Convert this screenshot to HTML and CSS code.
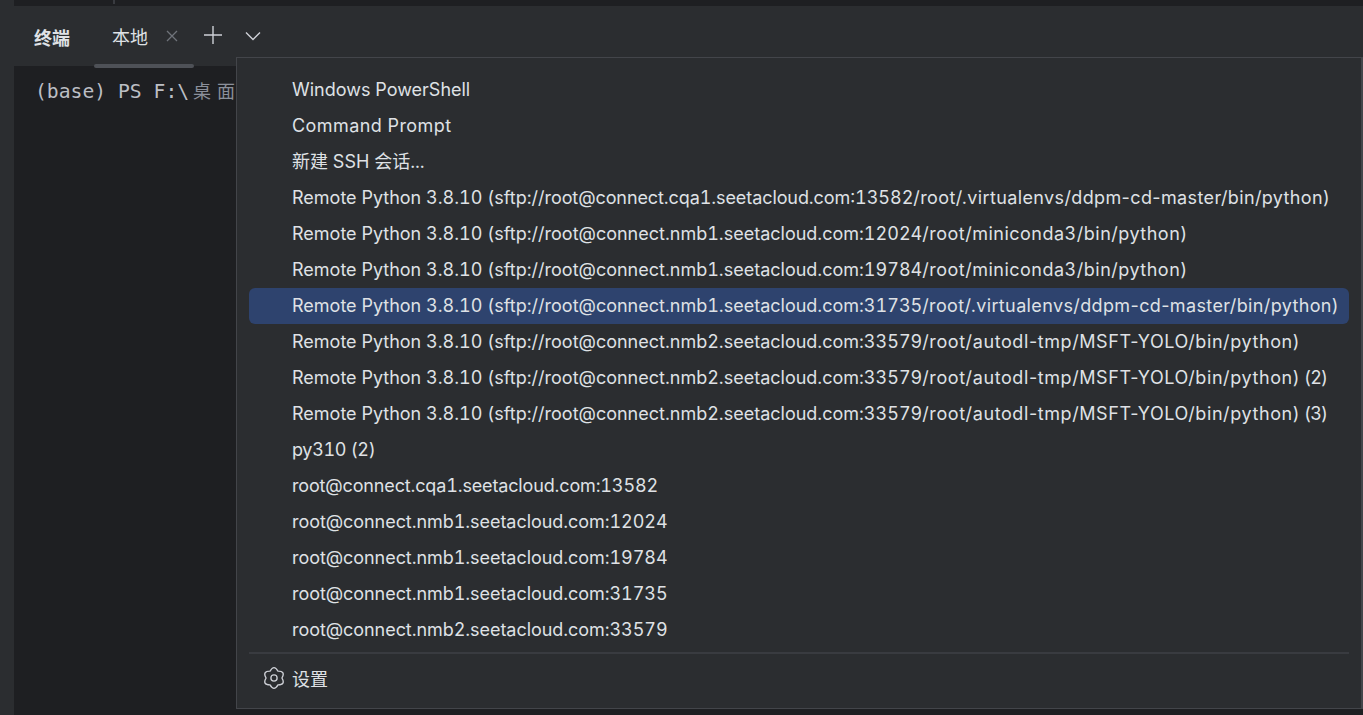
FILE: index.html
```html
<!DOCTYPE html>
<html lang="zh">
<head>
<meta charset="utf-8">
<title>终端</title>
<link rel="stylesheet" href="styles.css">
</head>
<body>
<div class="leftstrip"></div>
<div class="window">
  <div class="topstrip"><span class="tick"></span></div>
  <div class="panel">
    <div class="tabbar">
      <span class="title">终端</span>
      <span class="tab">本地
        <svg class="close" width="12" height="12" viewBox="0 0 12 12"><path d="M1 1l10 10M11 1L1 11" stroke="#6f737a" stroke-width="1.3" fill="none"/></svg>
        <span class="underline"></span>
      </span>
      <svg class="plus" width="20" height="20" viewBox="0 0 20 20"><path d="M10 1v18M1 10h18" stroke="#ced0d6" stroke-width="1.4" fill="none"/></svg>
      <svg class="chev" width="16" height="10" viewBox="0 0 16 10"><path d="M1 1.5l7 7 7-7" stroke="#ced0d6" stroke-width="1.4" fill="none"/></svg>
    </div>
    <div class="term">(base) PS F:\<span class="cjk">桌面</span></div>
  </div>
</div>
<div class="menu">
  <div class="list">
    <div class="item">Windows PowerShell</div>
    <div class="item"><span class="wide">Command Prompt</span></div>
    <div class="item">新建 SSH 会话...</div>
    <div class="item">Remote Python 3.8.10 (sftp://<span class="host-c">root@connect.cqa1.seetacloud.com</span>:13582<span class="venv">/root/.virtualenvs/ddpm-cd-master/bin/python)</span></div>
    <div class="item">Remote Python 3.8.10 (sftp://root@connect.nmb1.seetacloud.com:12024<span class="conda">/root/miniconda3/bin/python)</span></div>
    <div class="item">Remote Python 3.8.10 (sftp://root@connect.nmb1.seetacloud.com:19784<span class="conda">/root/miniconda3/bin/python)</span></div>
    <div class="item selected">Remote Python 3.8.10 (sftp://root@connect.nmb1.seetacloud.com:31735<span class="venv">/root/.virtualenvs/ddpm-cd-master/bin/python)</span></div>
    <div class="item">Remote Python 3.8.10 (sftp://root@connect.nmb2.seetacloud.com:33579<span class="yolo">/root/autodl-tmp/MSFT-YOLO/bin/python)</span></div>
    <div class="item">Remote Python 3.8.10 (sftp://root@connect.nmb2.seetacloud.com:33579<span class="yolo">/root/autodl-tmp/MSFT-YOLO/bin/python)</span><span class="tail-long"> (2)</span></div>
    <div class="item">Remote Python 3.8.10 (sftp://root@connect.nmb2.seetacloud.com:33579<span class="yolo">/root/autodl-tmp/MSFT-YOLO/bin/python)</span><span class="tail-long"> (3)</span></div>
    <div class="item"><span class="tail">py310 (2)</span></div>
    <div class="item"><span class="host-short-c">root@connect.cqa1.seetacloud.com:13582</span></div>
    <div class="item"><span class="host-short">root@connect.nmb1.seetacloud.com:12024</span></div>
    <div class="item"><span class="host-short">root@connect.nmb1.seetacloud.com:19784</span></div>
    <div class="item"><span class="host-short">root@connect.nmb1.seetacloud.com:31735</span></div>
    <div class="item"><span class="host-short">root@connect.nmb2.seetacloud.com:33579</span></div>
  </div>
  <div class="footer">
    <svg class="gear" width="24" height="24" viewBox="0 0 20 20"><path d="M13.3 4.28Q19.96 4.25 16.6 10Q19.96 15.75 13.3 15.72Q10 21.5 6.7 15.72Q.04 15.75 3.4 10Q.04 4.25 6.7 4.28Q10 -1.5 13.3 4.28Z" fill="none" stroke="#ced0d6" stroke-width="1.1" stroke-linejoin="round"/><circle cx="10" cy="10" r="2.6" fill="none" stroke="#ced0d6" stroke-width="1.1"/></svg>
    <span>设置</span>
  </div>
</div>
</body>
</html>
```
FILE: styles.css
```css
* { box-sizing: border-box; }
html, body { margin: 0; height: 100%; overflow: hidden; }
body {
  background: #1e1f22;
  width: 1363px;
  height: 715px;
  position: relative;
  color: #dfe1e5;
  font-family: Inter, "Noto Sans CJK SC", sans-serif;
  font-size: 18px;
  font-variant-numeric: tabular-nums;
  display: flex;
}
.leftstrip { width: 14px; flex: none; background: #2b2d30; }
.window { flex: 1; display: flex; flex-direction: column; min-width: 0; }
.topstrip { height: 6px; padding-left: 99px; flex: none; }
.tick { display: block; width: 2px; height: 4px; background: #393b40; }
.panel { flex: 1; display: flex; flex-direction: column; min-height: 0; }
.tabbar {
  height: 60px; flex: none; background: #2b2d30; position: relative;
  display: flex; align-items: center; padding-left: 20px; padding-bottom: 1px;
}
.title { font-weight: 700; font-family: "Noto Sans CJK SC", sans-serif; color: #dfe1e5; position: relative; top: 1px; }
.tab { position: relative; margin-left: 42px; display: flex; align-items: center; font-family: "Noto Sans CJK SC", sans-serif; }
.close { margin-left: 18px; }
.underline { position: absolute; left: -18px; bottom: -19px; width: 100px; height: 4px; border-radius: 2px; background: #4e5157; }
.plus { margin-left: 25px; position: relative; top: -1px; }
.chev { margin-left: 22px; }
.term {
  flex: 1; background: #1e1f22; padding: 10px 0 0 21px;
  font-family: "DejaVu Sans Mono", monospace; font-size: 19.7px; color: #bcbec4; line-height: 28px;
}
.cjk { font-family: "Noto Sans CJK SC", sans-serif; font-size: 18px; letter-spacing: 6px; color: #8b8f9a; margin-left: 4px; }
.menu {
  position: absolute; left: 236px; top: 57px; right: 0; height: 652px;
  background: #2b2d30; border: 1px solid #43454a; border-right-width: 2px; padding-top: 14px;
}
.list { display: flex; flex-direction: column; }
.item {
  height: 36px; line-height: 36px; margin: 0 12px; padding-left: 43px;
  border-radius: 6px; white-space: nowrap; color: #dfe1e5;
}
.selected { background: #2e436e; }
.wide { letter-spacing: .43px; }
.venv { letter-spacing: .37px; font-variant-numeric: normal; }
.conda { letter-spacing: .5px; }
.yolo { letter-spacing: .59px; font-variant-numeric: normal; }
.tail { letter-spacing: -.33px; }
.tail-long { letter-spacing: -.8px; }
.host-c { letter-spacing: -.09px; }
.host-short { letter-spacing: -.055px; }
.host-short-c { letter-spacing: -.15px; }
.footer {
  margin: 4px 12px 0; border-top: 2px solid #393b40; height: 50px;
  display: flex; align-items: center; padding-left: 13px; gap: 6px;
}
.gear { flex: none; }
```
